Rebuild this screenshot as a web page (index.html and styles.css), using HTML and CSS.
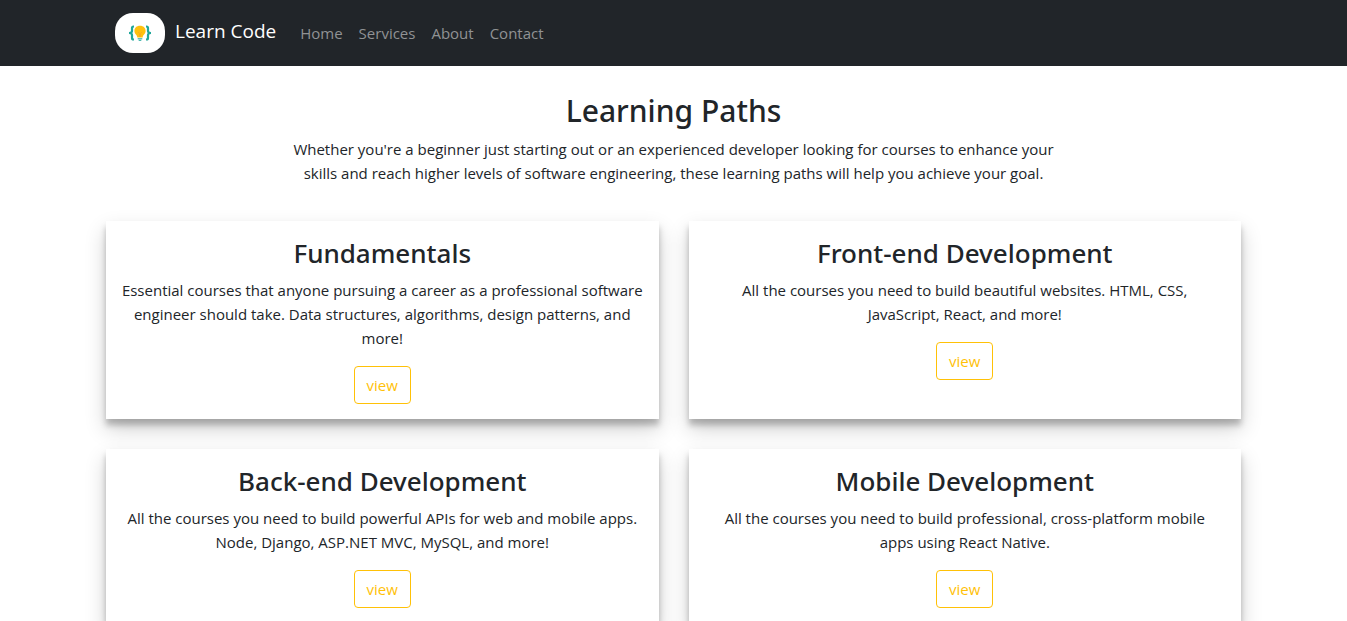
FILE: index.html
```html
<!DOCTYPE html>
<html lang="en">
<head>
<meta charset="utf-8">
<meta name="viewport" content="width=device-width, initial-scale=1">
<title>Learn Code</title>
<link rel="stylesheet" href="styles.css">
</head>
<body>
<header class="navbar">
  <nav class="navbar-inner">
    <a class="brand" href="#">
      <svg class="brand-logo" viewBox="0 0 50 40" aria-hidden="true">
        <rect width="50" height="40" rx="18" fill="#fff"/>
        <g fill="none" stroke="#1fa79a" stroke-width="2.200">
          <path d="M19 13.500H18.500Q17 13.500 17 15V18Q17 20 14 20Q17 20 17 22V25Q17 26.500 18.500 26.500H19"/>
          <path d="M31 13.500H31.500Q33 13.500 33 15V18Q33 20 36 20Q33 20 33 22V25Q33 26.500 31.500 26.500H31"/>
        </g>
        <path d="M25 12.800C21.500 12.800 19.400 15 19.400 17.900C19.400 20.900 22.300 21.700 22.300 24.600H27.700C27.700 21.700 30.600 20.900 30.600 17.900C30.600 15 28.500 12.800 25 12.800Z" fill="#ffc10e"/>
        <path d="M23 19L24.500 20.500V24M27 19L25.500 20.500V24" fill="none" stroke="#f5a623" stroke-width=".8"/>
        <path d="M22.700 25.800H27.300M23.700 27.300H26.300" stroke="#1fa79a" stroke-width="1"/>
      </svg>
      <span>Learn Code</span>
    </a>
    <ul class="nav-links">
      <li><a href="#">Home</a></li>
      <li><a href="#">Services</a></li>
      <li><a href="#">About</a></li>
      <li><a href="#">Contact</a></li>
    </ul>
  </nav>
</header>
<main class="container">
  <section class="intro">
    <h1>Learning Paths</h1>
    <p>Whether you're a beginner just starting out or an experienced developer looking for courses to enhance your skills and reach higher levels of software engineering, these learning paths will help you achieve your goal.</p>
  </section>
  <section class="paths">
    <article class="card">
      <h2>Fundamentals</h2>
      <p>Essential courses that anyone pursuing a career as a professional software engineer should take. Data structures, algorithms, design patterns, and more!</p>
      <button class="view-button" type="button">view</button>
    </article>
    <article class="card">
      <h2>Front-end Development</h2>
      <p>All the courses you need to build beautiful websites. HTML, CSS,<br> JavaScript, React, and more!</p>
      <button class="view-button" type="button">view</button>
    </article>
    <article class="card">
      <h2>Back-end Development</h2>
      <p>All the courses you need to build powerful APIs for web and mobile apps. Node, Django, ASP.NET MVC, MySQL, and more!</p>
      <button class="view-button" type="button">view</button>
    </article>
    <article class="card">
      <h2>Mobile Development</h2>
      <p>All the courses you need to build professional, cross-platform mobile<br> apps using React Native.</p>
      <button class="view-button" type="button">view</button>
    </article>
  </section>
</main>
</body>
</html>
```
FILE: styles.css
```css
*, *::before, *::after {
  box-sizing: border-box;
}

body {
  margin: 0;
  color: #212529;
  background: #fff;
  font-family: "Segoe UI", "Open Sans", "Noto Sans", sans-serif;
  font-size: 15px;
  line-height: 24px;
}

h1, h2, p, ul {
  margin: 0;
  padding: 0;
}

a {
  color: inherit;
  text-decoration: none;
}

.navbar {
  background: #212529;
}

.navbar-inner {
  display: flex;
  align-items: center;
  gap: 16px;
  max-width: 1135px;
  margin: 0 auto;
  padding: 13px 9px;
}

.brand {
  display: flex;
  align-items: center;
  gap: 10px;
  padding-right: 8px;
  color: #fff;
  font-size: 19px;
  line-height: 36px;
}

.brand span {
  padding-bottom: 4px;
}

.brand-logo {
  width: 50px;
  height: 40px;
}

.nav-links {
  display: flex;
  gap: 16px;
  list-style: none;
  color: #909294;
}

.container {
  max-width: 1135px;
  margin: 0 auto;
}

.intro {
  max-width: 800px;
  margin: 0 auto;
  padding: 26px 12px 36px;
  text-align: center;
}

h1, h2 {
  font-family: "Segoe UI", "Noto Sans", "Open Sans", sans-serif;
  font-weight: 500;
}

h1 {
  margin-bottom: 7px;
  font-size: 30px;
  line-height: 38px;
}

h2 {
  margin-bottom: 8px;
  font-size: 26px;
  line-height: 34px;
}

.paths {
  display: grid;
  grid-template-columns: repeat(2, 1fr);
  gap: 30px;
  padding-bottom: 30px;
}

.card {
  padding: 15px;
  text-align: center;
  background: #fff;
  box-shadow: 0 10px 20px rgba(0, 0, 0, 0.19), 0 6px 6px rgba(0, 0, 0, 0.23);
}

.card p {
  margin-bottom: 16px;
}

.view-button {
  padding: 6px 12px;
  color: #ffc107;
  background: transparent;
  border: 1px solid #ffc107;
  border-radius: 4px;
  font: inherit;
  cursor: pointer;
}
```
